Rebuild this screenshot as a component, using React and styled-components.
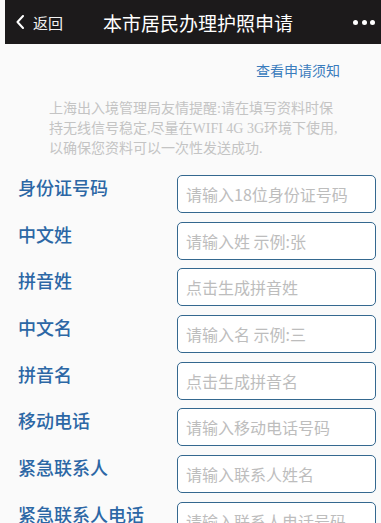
import React from "react";
import styled, { createGlobalStyle } from "styled-components";

const Global = createGlobalStyle`
  html, body { margin: 0; padding: 0; background: #fafafa; }
  body { font-family: "Noto Sans CJK SC", "Noto Sans", sans-serif; }
  * { box-sizing: border-box; }
`;

const Page = styled.div`
  width: 381px;
  min-height: 523px;
  background: #fafafa;
  overflow: hidden;
`;

const Header = styled.div`
  margin-left: 5px;
  height: 44px;
  background: #1c1a1b;
  display: flex;
  align-items: center;
  padding: 0 6px 0 11px;
  color: #fff;
`;

const Back = styled.div`
  display: flex;
  align-items: center;
  gap: 9px;
  font-size: 15px;
  color: #f2f2f2;
`;

const Title = styled.div`
  margin-left: 40px;
  font-size: 19px;
  flex: 1;
  color: #fff;
  white-space: nowrap;
`;

const Dots = styled.div`
  display: flex;
  gap: 3.5px;
`;

const Dot = styled.span`
  width: 5px;
  height: 5px;
  border-radius: 50%;
  background: #fff;
`;

const LinkRow = styled.div`
  margin-top: 16px;
  padding-right: 41px;
  text-align: right;
  font-size: 14px;
  line-height: 20px;
  color: #3a7cbd;
`;

const Notice = styled.p`
  margin: 18px 0 0;
  padding-left: 49px;
  font-family: "Liberation Serif", "Noto Sans CJK SC", serif;
  font-size: 14px;
  line-height: 19px;
  color: #c4c4c4;
  white-space: nowrap;
  & span { font-family: "Noto Sans CJK SC", sans-serif; }
`;

const Form = styled.div`
  margin-top: 17px;
  display: flex;
  flex-direction: column;
  gap: 8.7px;
`;

const Row = styled.div`
  display: flex;
  align-items: flex-start;
  padding-left: 18px;
`;

const Label = styled.div`
  width: 159px;
  font-size: 18px;
  line-height: 24px;
  font-weight: 500;
  color: #2c67a5;
  white-space: nowrap;
`;

const Field = styled.div`
  width: 199px;
  height: 38px;
  border: 1.5px solid #34688f;
  border-radius: 5px;
  background: #fff;
  display: flex;
  align-items: center;
  padding-left: 8px;
  font-size: 16px;
  color: #bdbdbd;
  white-space: nowrap;
  overflow: hidden;
`;

const rows = [
  ["身份证号码", "请输入18位身份证号码"],
  ["中文姓", "请输入姓 示例:张"],
  ["拼音姓", "点击生成拼音姓"],
  ["中文名", "请输入名 示例:三"],
  ["拼音名", "点击生成拼音名"],
  ["移动电话", "请输入移动电话号码"],
  ["紧急联系人", "请输入联系人姓名"],
  ["紧急联系人电话", "请输入联系人电话号码"],
];

export default function App() {
  return (
    <Page>
      <Global />
      <Header>
        <Back>
          <svg width="8" height="14" viewBox="0 0 8 14">
            <path d="M7 1 L1.5 7 L7 13" fill="none" stroke="#fff" strokeWidth="2" strokeLinecap="round" strokeLinejoin="round" />
          </svg>
          <span>返回</span>
        </Back>
        <Title>本市居民办理护照申请</Title>
        <Dots>
          <Dot />
          <Dot />
          <Dot />
        </Dots>
      </Header>
      <LinkRow>查看申请须知</LinkRow>
      <Notice>
        <span>上海出入境管理局友情提醒</span>:<span>请在填写资料时保</span>
        <br />
        <span>持无线信号稳定</span>,<span>尽量在</span>WIFI 4G 3G<span>环境下使用</span>,
        <br />
        <span>以确保您资料可以一次性发送成功</span>.
      </Notice>
      <Form>
        {rows.map(([l, p]) => (
          <Row key={l}>
            <Label>{l}</Label>
            <Field>{p}</Field>
          </Row>
        ))}
      </Form>
    </Page>
  );
}
